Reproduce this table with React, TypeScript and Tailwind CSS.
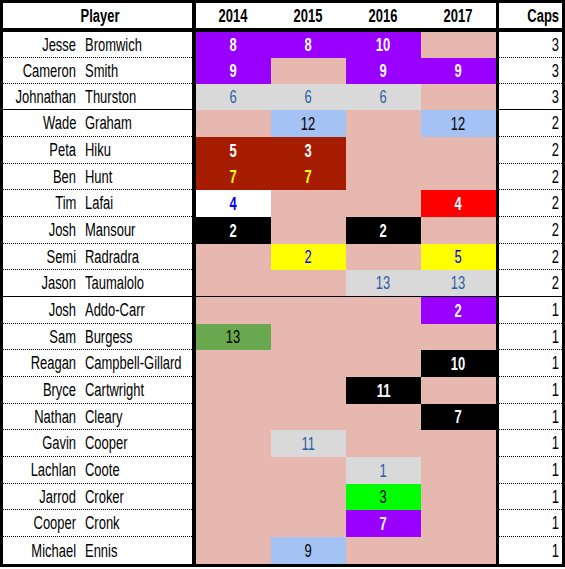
import React from "react";

type Cell = { v?: number; bg: string; fg?: string; bold?: boolean } | null;

const PINK = "bg-[#e6b8af]";
const P = (v: number): Cell => ({ v, bg: "bg-[#9900ff]", fg: "text-white", bold: true });
const G = (v: number): Cell => ({ v, bg: "bg-[#d9d9d9]", fg: "text-[#2a5ea8]" });
const LB = (v: number): Cell => ({ v, bg: "bg-[#a4c2f4]", fg: "text-black" });
const DR = (v: number, fg: string): Cell => ({ v, bg: "bg-[#a61c00]", fg, bold: true });
const BK = (v: number): Cell => ({ v, bg: "bg-black", fg: "text-white", bold: true });
const YL = (v: number): Cell => ({ v, bg: "bg-[#ffff00]", fg: "text-[#0000ff]" });
const _ = null;

const rows: [string, string, Cell[], number][] = [
  ["Jesse", "Bromwich", [P(8), P(8), P(10), _], 3],
  ["Cameron", "Smith", [P(9), _, P(9), P(9)], 3],
  ["Johnathan", "Thurston", [G(6), G(6), G(6), _], 3],
  ["Wade", "Graham", [_, LB(12), _, LB(12)], 2],
  ["Peta", "Hiku", [DR(5, "text-white"), DR(3, "text-white"), _, _], 2],
  ["Ben", "Hunt", [DR(7, "text-[#ffff00]"), DR(7, "text-[#ffff00]"), _, _], 2],
  ["Tim", "Lafai", [{ v: 4, bg: "bg-white", fg: "text-[#0000ff]", bold: true }, _, _, { v: 4, bg: "bg-[#ff0000]", fg: "text-white", bold: true }], 2],
  ["Josh", "Mansour", [BK(2), _, BK(2), _], 2],
  ["Semi", "Radradra", [_, YL(2), _, YL(5)], 2],
  ["Jason", "Taumalolo", [_, _, G(13), G(13)], 2],
  ["Josh", "Addo-Carr", [_, _, _, P(2)], 1],
  ["Sam", "Burgess", [{ v: 13, bg: "bg-[#6aa84f]", fg: "text-black" }, _, _, _], 1],
  ["Reagan", "Campbell-Gillard", [_, _, _, BK(10)], 1],
  ["Bryce", "Cartwright", [_, _, BK(11), _], 1],
  ["Nathan", "Cleary", [_, _, _, BK(7)], 1],
  ["Gavin", "Cooper", [_, G(11), _, _], 1],
  ["Lachlan", "Coote", [_, _, G(1), _], 1],
  ["Jarrod", "Croker", [_, _, { v: 3, bg: "bg-[#00ff00]", fg: "text-black" }, _], 1],
  ["Cooper", "Cronk", [_, _, P(7), _], 1],
  ["Michael", "Ennis", [_, LB(9), _, _], 1],
];

const heights = [26, 26, 26, 27, 27, 26, 27, 27, 26, 27, 27, 26, 27, 27, 26, 27, 27, 26, 27, 27];

export default function App() {
  return (
    <div
      className="w-[565px] h-[569px] bg-white text-black text-[18px] leading-none"
      style={{ fontFamily: "'Liberation Sans', Arial, sans-serif" }}
    >
      <div className="w-[565px] border-[3px] border-black">
        {/* header */}
        <div className="flex h-[29px] border-b-4 border-black font-bold">
          <div className="w-[189px] flex items-center justify-center pl-[5px]">
            <span className="inline-block scale-x-[0.72]">Player</span>
          </div>
          <div className="w-[4px] bg-black" />
          {["2014", "2015", "2016", "2017"].map((y) => (
            <div key={y} className="w-[75px] flex items-center justify-center">
              <span className="inline-block scale-x-[0.72]">{y}</span>
            </div>
          ))}
          <div className="w-[3px] bg-black" />
          <div className="flex-1 flex items-center justify-end pr-[3px]">
            <span className="inline-block scale-x-[0.72] origin-right">Caps</span>
          </div>
        </div>
        {rows.map(([first, last, cells, caps], i) => {
          const isLast = i === rows.length - 1;
          const solid = i === 2 || i === 9;
          const bb = isLast ? "" : solid ? "border-b border-solid border-black" : "border-b border-dotted border-black";
          return (
            <div key={i} className="flex" style={{ height: heights[i] }}>
              <div className={`w-[189px] flex items-center ${bb}`}>
                <div className="w-[73px] shrink-0 flex justify-end">
                  <span className="inline-block shrink-0 scale-x-[0.72] origin-right whitespace-nowrap">{first}</span>
                </div>
                <span className="ml-[9px] inline-block scale-x-[0.72] origin-left whitespace-nowrap">{last}</span>
              </div>
              <div className="w-[4px] bg-black" />
              <div className={`flex ${i === 9 ? "border-b border-solid border-black" : ""}`}>
                {cells.map((c, j) => (
                  <div
                    key={j}
                    className={`w-[75px] h-full flex items-center justify-center ${c ? c.bg : PINK} ${c?.fg ?? ""} ${c?.bold ? "font-bold" : ""}`}
                  >
                    <span className="inline-block scale-x-[0.72]">{c?.v}</span>
                  </div>
                ))}
              </div>
              <div className="w-[3px] bg-black" />
              <div className={`flex-1 flex items-center justify-end pr-[3px] ${bb}`}>
                <span className="inline-block scale-x-[0.72] origin-right">{caps}</span>
              </div>
            </div>
          );
        })}
      </div>
    </div>
  );
}
